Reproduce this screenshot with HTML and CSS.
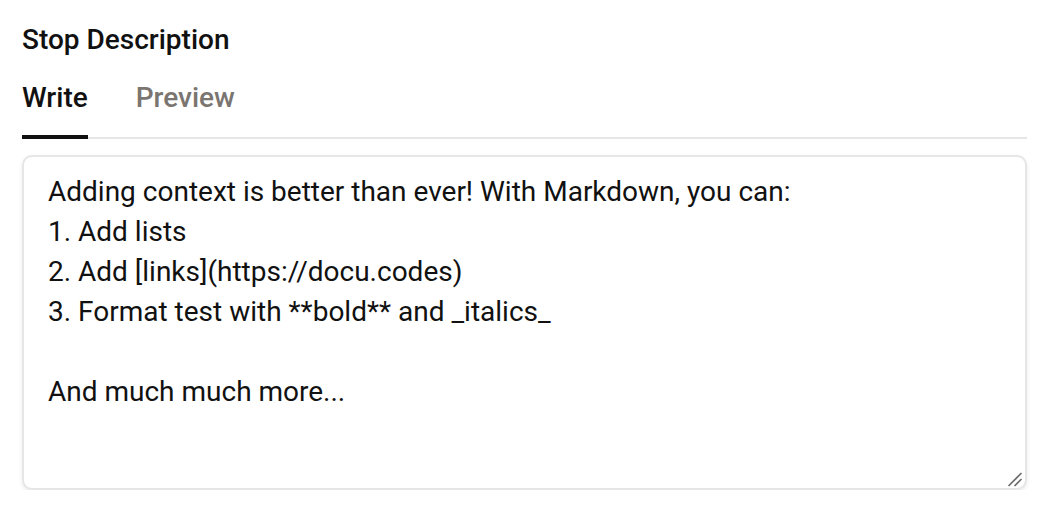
FILE: index.html
```html
<!DOCTYPE html>
<html lang="en">
<head>
    <meta charset="UTF-8">
    <meta name="viewport" content="width=device-width, initial-scale=1.0">
    <title>Stop Description</title>
    <link rel="stylesheet" href="styles.css">
</head>
<body>
    <div class="field">
        <h2 class="label">Stop Description</h2>
        <div class="tabs">
            <button class="tab active">Write</button>
            <button class="tab">Preview</button>
        </div>
        <div class="editor-wrap">
            <textarea class="editor" id="description">Adding context is better than ever! With Markdown, you can:
1. Add lists
2. Add [links](https://docu.codes)
3. Format test with **bold** and _italics_

And much much more...</textarea>
            <svg class="grip" width="16" height="16" viewBox="0 0 16 16">
                <line x1="1.5" y1="15" x2="14.5" y2="2" stroke="#6b6b6b" stroke-width="1.6" />
                <line x1="7.5" y1="15" x2="14.5" y2="8" stroke="#6b6b6b" stroke-width="1.6" />
            </svg>
        </div>
    </div>
</body>
</html>
```

FILE: styles.css
```css
body{
    margin: 0;
    background: #fff;
    font-family: Roboto, "Liberation Sans", sans-serif;
    color: #111;
}
.field{
    padding: 22px 21px 0 22px;
    display: flex;
    flex-direction: column;
}
.label{
    margin: 0;
    font-size: 28px;
    font-weight: 500;
    line-height: 36px;
}
.tabs{
    display: flex;
    gap: 48px;
    margin-top: 24px;
    border-bottom: 2px solid #e6e6e6;
}
.tab{
    background: none;
    border: none;
    padding: 0 0 21px 0;
    margin-bottom: -2px;
    font-family: inherit;
    font-size: 28px;
    font-weight: 500;
    line-height: 32px;
    color: #7a7570;
    border-bottom: 4px solid transparent;
    cursor: pointer;
}
.tab.active{
    color: #111;
    border-bottom-color: #111;
}
.editor-wrap{
    position: relative;
    margin-top: 16px;
    display: flex;
}
.editor{
    flex: 1;
    height: 335px;
    box-sizing: border-box;
    padding: 15px 24px;
    border: 2px solid #e6e6e6;
    border-radius: 10px;
    box-shadow: 0 2px 4px rgba(0,0,0,0.08);
    font-family: inherit;
    font-size: 28px;
    line-height: 40px;
    color: #111;
    resize: none;
    outline: none;
}
.grip{
    position: absolute;
    right: 4px;
    bottom: 3px;
    pointer-events: none;
}
```
